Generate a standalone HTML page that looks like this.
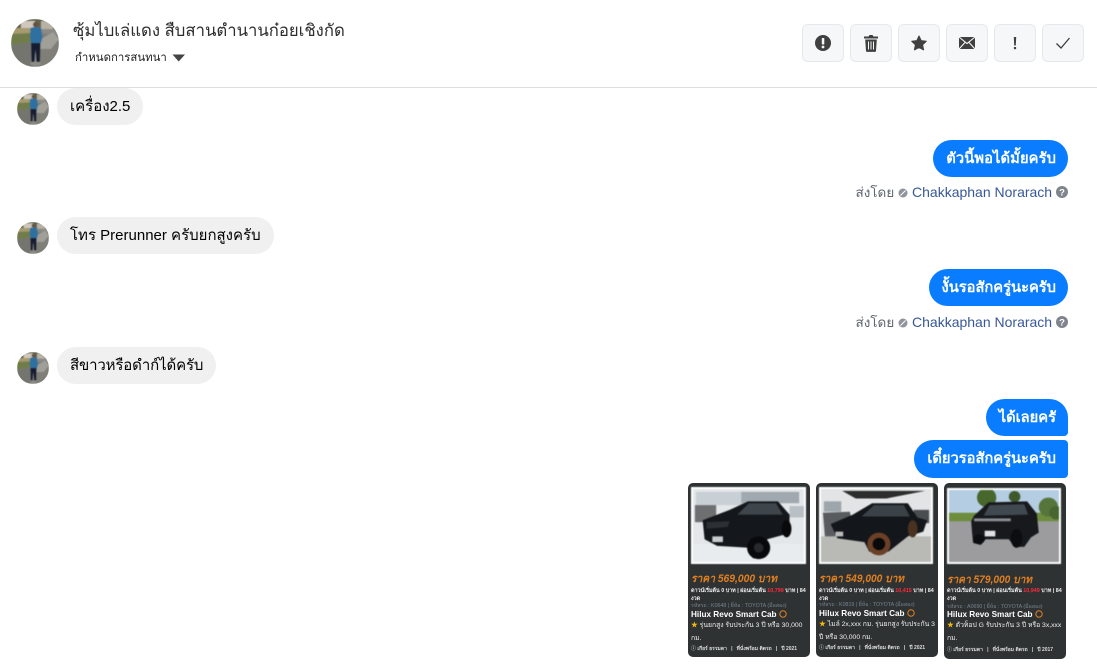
<!DOCTYPE html>
<html lang="th"><head><meta charset="utf-8"><title>Chat</title>
<style>
*{box-sizing:border-box}
html,body{margin:0;padding:0;background:#fff}
body{position:relative;width:1097px;height:672px;overflow:hidden;font-family:"Liberation Sans","Noto Sans CJK SC",sans-serif;color:#000}
.a{position:absolute;white-space:nowrap}
.btn{position:absolute;top:24px;width:42px;height:38px;background:#f6f7f9;border:1px solid #e6e8ec;border-radius:6px}
.btn svg{position:absolute;left:0;top:0;width:40px;height:36px}
.in{position:absolute;left:57px;height:37px;background:#f0f0f0;border-radius:19px;padding:0 13px;font-size:15px;line-height:38px;white-space:nowrap}
.out{position:absolute;right:29px;height:37px;background:#0a7cff;border-radius:19px;padding:0 12px 0 13px;font-size:14.7px;line-height:38px;color:#fff;font-weight:bold;white-space:nowrap}
.sent{position:absolute;right:29px;font-size:14px;line-height:16px;color:#606770;white-space:nowrap}
.sent i{font-style:normal;font-size:13.5px}
.sent b{font-weight:normal;color:#385898}
.sent svg{vertical-align:-1px}
.card{position:absolute;background:#2e3233;border-radius:5px;overflow:hidden;color:#fff}
.card svg.ph{position:absolute;border:2px solid #fff;background:#ddd;filter:blur(.5px)}
.card svg.pr{position:absolute;left:0;width:122px;height:16px;filter:blur(.25px)}
.card svg.pr text{font-family:"Liberation Sans","Noto Sans CJK SC",sans-serif;font-size:11px;font-weight:bold;font-style:italic;fill:#e07f20}
.card div{position:absolute;white-space:nowrap;filter:blur(.25px);font-family:"Liberation Sans","Noto Sans CJK SC",sans-serif}
.sm{font-size:5.400px;line-height:8px;color:#eee;font-weight:bold}
.sm span{color:#ff2a3a}
.gr{font-size:5.300px;color:#76838f;line-height:8px}
.ti{font-size:8.200px;font-weight:bold;line-height:10px}
.ti svg{vertical-align:-1px}
.de{font-size:6.800px;line-height:12.500px;color:#eee}
.de span{color:#f5b90a}
.ft{font-size:5px;color:#ddd;font-weight:bold;line-height:8px}
</style></head>
<body>
<svg width="0" height="0" style="position:absolute"><defs>
<clipPath id="c"><circle cx="24" cy="24" r="24"/></clipPath>
<filter id="bl"><feGaussianBlur stdDeviation=".6"/></filter>
<g id="av"><g clip-path="url(#c)"><g filter="url(#bl)">
<rect width="48" height="48" fill="#8a8a86"/>
<rect width="48" height="9" fill="#5f6350"/>
<rect x="10" y="2" width="14" height="8" fill="#cfc8bb"/>
<rect x="30" y="2" width="12" height="8" fill="#b7b2a4"/>
<rect y="9" width="24" height="7" fill="#a69a6e"/>
<path d="M0 15 22 14V23L0 26Z" fill="#6f7d4c"/>
<path d="M0 26 22 23V48H0Z" fill="#75756f"/>
<path d="M26 14 48 16V48H26Z" fill="#7f7f78"/>
<path d="M27 22 42 13 48 20 40 30 29 30Z" fill="#a09f98"/>
<circle cx="24.500" cy="5.500" r="2.600" fill="#6a4f3a"/>
<path d="M19.500 9 23 8h3l4 1 1.500 9-1.500 6H20l-1-7z" fill="#2f6fa0"/>
<path d="M20 24h9.500l-.5 19h-3.500l-1-13-1 13h-3z" fill="#141d33"/>
<path d="M19.500 43h10v3h-10z" fill="#8d8d87"/>
</g></g></g>
</defs></svg>

<!-- header -->
<svg class="a" style="left:11px;top:19px" width="48" height="48"><use href="#av"/></svg>
<div class="a" style="left:73px;top:21px;font-size:16.700px;line-height:20px;color:#2d2d2d">ซุ้มไบเล่แดง สืบสานตำนานก๋อยเชิงกัด</div>
<div class="a" style="left:75px;top:51px;font-size:11.400px;line-height:15px;color:#222">กำหนดการสนทนา</div>
<svg class="a" style="left:172px;top:54px" width="14" height="9"><path d="M.5.500h12.500L6.700 7.500z" fill="#444"/></svg>
<div class="a" style="left:0;top:87px;width:1097px;height:1px;background:#dedede"></div>

<div class="btn" style="left:802px"><svg viewBox="0 0 40 36"><circle cx="20" cy="18" r="8" fill="#404040"/><rect x="18.800" y="13" width="2.500" height="6.500" rx=".6" fill="#f6f7f9"/><circle cx="20" cy="22" r="1.400" fill="#f6f7f9"/></svg></div>
<div class="btn" style="left:850px"><svg viewBox="0 0 40 36"><path d="M13 11.500h4.500l1-1.500h3l1 1.500H27v2H13z" fill="#404040"/><path d="M14.200 14.500h11.600l-.8 11.500a1 1 0 0 1-1 .9h-8a1 1 0 0 1-1-.9z" fill="#404040"/><path d="M17.500 16.500v8M20 16.500v8M22.500 16.500v8" stroke="#f6f7f9" stroke-width="1"/></svg></div>
<div class="btn" style="left:898px"><svg viewBox="0 0 40 36"><path d="M20 11l2.200 4.600 5.100.7-3.700 3.500 1 5.100-4.600-2.500-4.600 2.500 1-5.100-3.700-3.500 5.100-.7z" fill="#404040" stroke="#404040" stroke-linejoin="round"/></svg></div>
<div class="btn" style="left:946px"><svg viewBox="0 0 40 36"><rect x="12" y="12" width="16" height="12" fill="#404040"/><path d="M12 12l8 6.500 8-6.500M12 24l6-6.500M28 24l-6-6.500" stroke="#f6f7f9" stroke-width="1.100" fill="none"/></svg></div>
<div class="btn" style="left:994px"><svg viewBox="0 0 40 36"><path d="M18.800 12h2.400l-.4 8.500h-1.600z" fill="#404040"/><rect x="18.900" y="22" width="2.200" height="2.200" fill="#404040"/></svg></div>
<div class="btn" style="left:1042px"><svg viewBox="0 0 40 36"><path d="M13.500 18.500l4.500 4.500 8.500-10" stroke="#404040" stroke-width="1.300" fill="none"/></svg></div>

<!-- messages -->
<svg class="a" style="left:17px;top:93px" width="32" height="32" viewBox="0 0 48 48"><use href="#av"/></svg>
<div class="in" style="top:88px">เครื่อง2.5</div>

<div class="out" style="top:140px;letter-spacing:.1px">ตัวนี้พอได้มั้ยครับ</div>
<div class="sent" style="top:184px"><i>ส่งโดย</i> <svg width="10" height="10" viewBox="0 0 10 10"><circle cx="5" cy="5" r="4.500" fill="#90949c"/><path d="M2.500 7.500l5-5" stroke="#fff" stroke-width="1"/></svg> <b>Chakkaphan Norarach</b> <svg width="12" height="12" viewBox="0 0 12 12"><circle cx="6" cy="6" r="6" fill="#80858d"/><text x="6" y="9.500" font-size="9.500" font-weight="bold" text-anchor="middle" fill="#fff" font-family="Liberation Sans">?</text></svg></div>

<svg class="a" style="left:17px;top:222px" width="32" height="32" viewBox="0 0 48 48"><use href="#av"/></svg>
<div class="in" style="top:217px">โทร Prerunner ครับยกสูงครับ</div>

<div class="out" style="top:269px">งั้นรอสักครู่นะครับ</div>
<div class="sent" style="top:314px"><i>ส่งโดย</i> <svg width="10" height="10" viewBox="0 0 10 10"><circle cx="5" cy="5" r="4.500" fill="#90949c"/><path d="M2.500 7.500l5-5" stroke="#fff" stroke-width="1"/></svg> <b>Chakkaphan Norarach</b> <svg width="12" height="12" viewBox="0 0 12 12"><circle cx="6" cy="6" r="6" fill="#80858d"/><text x="6" y="9.500" font-size="9.500" font-weight="bold" text-anchor="middle" fill="#fff" font-family="Liberation Sans">?</text></svg></div>

<svg class="a" style="left:17px;top:352px" width="32" height="32" viewBox="0 0 48 48"><use href="#av"/></svg>
<div class="in" style="top:347px;letter-spacing:-.15px">สีขาวหรือดำก์ได้ครับ</div>

<div class="out" style="top:399px;border-bottom-right-radius:4px">ได้เลยครั</div>
<div class="out" style="top:440px;height:38px;border-top-right-radius:4px;border-bottom-right-radius:4px">เดี๋ยวรอสักครู่นะครับ</div>

<!-- card 1 -->
<div class="card" style="left:688px;top:483px;width:122px;height:174px">
<svg class="ph" style="left:3px;top:4px;width:115px;height:77px" viewBox="0 0 115 77" preserveAspectRatio="none">
<rect width="115" height="77" fill="#e4e7ea"/>
<rect x="3" y="3" width="50" height="14" fill="#c8d0d6"/><rect x="50" y="3" width="60" height="12" fill="#9fa9af"/>
<rect x="2" y="17" width="22" height="18" fill="#6e6f70"/><rect x="100" y="18" width="15" height="12" fill="#b8c0c6"/>
<rect y="58" width="115" height="19" fill="#e8ecef"/>
<path d="M10 33 38 22 57 13 88 13 100 27 100 40 95 48 77 53 72 73 62 73 58 62 25 60 12 53Z" fill="#14171b"/>
<path d="M58 15 86 15 93 27 46 27Z" fill="#3e464c"/>
<path d="M14 35 38 34 36 40 14 42Z" fill="#2c3034"/>
<rect x="20" y="50" width="11" height="6" fill="#c9ccce"/>
<circle cx="68" cy="62" r="12" fill="#08090a"/><circle cx="68" cy="62" r="5" fill="#26292c"/>
<ellipse cx="97" cy="42" rx="5" ry="9" fill="#08090a"/>
</svg>
<svg class="pr" style="top:87px" viewBox="0 0 122 16"><text x="3" y="12" textLength="86" lengthAdjust="spacingAndGlyphs">ราคา 569,000 บาท</text></svg>
<div class="sm" style="left:3px;top:104px">ดาวน์เริ่มต้น 0 บาท | ผ่อนเริ่มต้น <span>10,799</span> บาท | 84<br>งวด</div>
<div class="gr" style="left:3px;top:119px">รหัสรถ : K0648 | ยี่ห้อ : TOYOTA (มือสอง)</div>
<div class="ti" style="left:3px;top:127px">Hilux Revo Smart Cab <svg width="8" height="8"><circle cx="4" cy="4" r="3.200" fill="none" stroke="#e07f20"/></svg></div>
<div class="de" style="left:3px;top:137px"><span>★</span> รุ่นยกสูง รับประกัน 3 ปี หรือ 30,000<br>กม.</div>
<div class="ft" style="left:3px;top:162px">ⓘ เกียร์ ธรรมดา &nbsp;&nbsp;|&nbsp;&nbsp; ที่นั่งพร้อม ติดรถ &nbsp;&nbsp;|&nbsp;&nbsp; ปี 2021</div>
</div>

<!-- card 2 -->
<div class="card" style="left:816px;top:483px;width:122px;height:174px">
<svg class="ph" style="left:3px;top:4px;width:114px;height:77px" viewBox="0 0 114 77" preserveAspectRatio="none">
<rect width="114" height="77" fill="#e2e4e5"/>
<path d="M22 2H108L68 10 36 10Z" fill="#2d2d2d"/>
<rect x="3" y="13" width="18" height="11" fill="#9ca6ab"/>
<rect y="50" width="114" height="27" fill="#b9b9b5"/>
<path d="M2 25 30 24 34 50 4 50Z" fill="#585c5f"/>
<rect x="96" y="22" width="16" height="14" fill="#4a4d50"/>
<path d="M10 37 33 27 53 15 90 15 100 30 110 33 106 45 90 50 70 66 50 66 45 56 17 52Z" fill="#13161a"/>
<path d="M55 17 86 17 92 29 42 29Z" fill="#3a4247"/>
<circle cx="60" cy="58" r="12" fill="#6b4026"/><circle cx="60" cy="58" r="6.500" fill="#08090a"/>
<ellipse cx="95" cy="42" rx="5" ry="9" fill="#4a3222"/>
<rect x="15" y="45" width="8" height="5" fill="#bbb"/>
</svg>
<svg class="pr" style="top:87px" viewBox="0 0 122 16"><text x="3" y="12" textLength="85" lengthAdjust="spacingAndGlyphs">ราคา 549,000 บาท</text></svg>
<div class="sm" style="left:3px;top:104px">ดาวน์เริ่มต้น 0 บาท | ผ่อนเริ่มต้น <span>10,415</span> บาท | 84<br>งวด</div>
<div class="gr" style="left:3px;top:118px">รหัสรถ : K0819 | ยี่ห้อ : TOYOTA (มือสอง)</div>
<div class="ti" style="left:3px;top:126px">Hilux Revo Smart Cab <svg width="8" height="8"><circle cx="4" cy="4" r="3.200" fill="none" stroke="#e07f20"/></svg></div>
<div class="de" style="left:3px;top:136px"><span>★</span> ไมล์ 2x,xxx กม. รุ่นยกสูง รับประกัน 3<br>ปี หรือ 30,000 กม.</div>
<div class="ft" style="left:3px;top:161px">ⓘ เกียร์ ธรรมดา &nbsp;&nbsp;|&nbsp;&nbsp; ที่นั่งพร้อม ติดรถ &nbsp;&nbsp;|&nbsp;&nbsp; ปี 2021</div>
</div>

<!-- card 3 -->
<div class="card" style="left:944px;top:483px;width:122px;height:176px">
<svg class="ph" style="left:3px;top:5px;width:114px;height:76px" viewBox="0 0 114 76" preserveAspectRatio="none">
<rect width="114" height="76" fill="#b5cde2"/>
<path d="M0 24H114V35H0Z" fill="#6d8c3e"/>
<circle cx="39" cy="8" r="10" fill="#47672c"/><circle cx="68" cy="7" r="6" fill="#3e5a2b"/><circle cx="103" cy="18" r="10" fill="#55753a"/><circle cx="111" cy="24" r="7" fill="#47652f"/>
<rect y="33" width="114" height="43" fill="#9c9c9e"/>
<path d="M23 33 26 27 41 13 81 12 91 25 93 45 85 50 78 60 68 60 62 52 38 52 33 58 25 56 24 46Z" fill="#17191d"/>
<path d="M42 16 78 15 82 26 36 27Z" fill="#414950"/>
<rect x="37" y="43" width="11" height="6" fill="#dfe2e6"/>
<rect x="26" y="30" width="38" height="3" fill="#8b8f94"/>
<ellipse cx="70" cy="51" rx="6" ry="10" fill="#0c0d0f"/>
<ellipse cx="31" cy="52" rx="6" ry="5" fill="#0c0d0f"/>
</svg>
<svg class="pr" style="top:88px" viewBox="0 0 122 16"><text x="3" y="12" textLength="85" lengthAdjust="spacingAndGlyphs">ราคา 579,000 บาท</text></svg>
<div class="sm" style="left:3px;top:104px">ดาวน์เริ่มต้น 0 บาท | ผ่อนเริ่มต้น <span>10,949</span> บาท | 84<br>งวด</div>
<div class="gr" style="left:3px;top:120px">รหัสรถ : A0690 | ยี่ห้อ : TOYOTA (มือสอง)</div>
<div class="ti" style="left:3px;top:127px">Hilux Revo Smart Cab <svg width="8" height="8"><circle cx="4" cy="4" r="3.200" fill="none" stroke="#e07f20"/></svg></div>
<div class="de" style="left:3px;top:137px"><span>★</span> ตัวท็อป G รับประกัน 3 ปี หรือ 3x,xxx<br>กม.</div>
<div class="ft" style="left:3px;top:163px">ⓘ เกียร์ ธรรมดา &nbsp;&nbsp;|&nbsp;&nbsp; ที่นั่งพร้อม ติดรถ &nbsp;&nbsp;|&nbsp;&nbsp; ปี 2017</div>
</div>
</body></html>
